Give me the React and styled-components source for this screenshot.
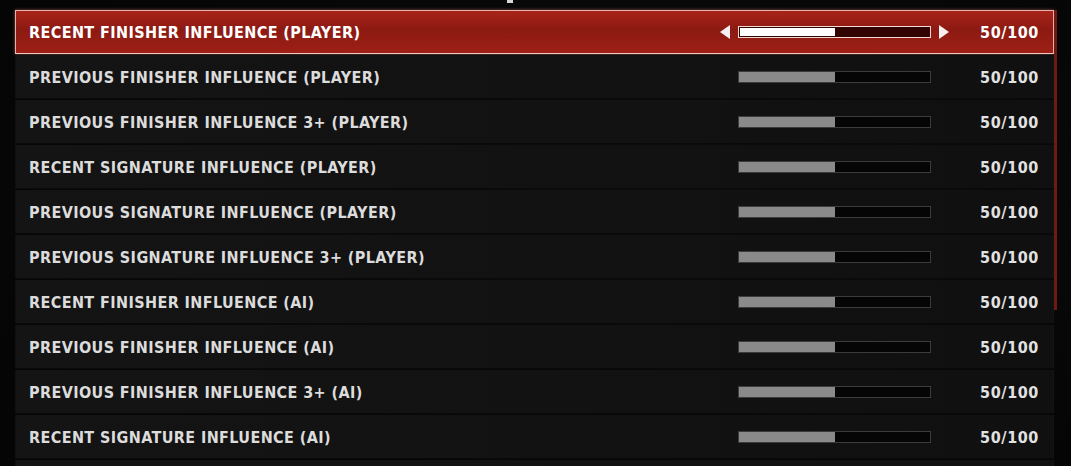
import styled, { createGlobalStyle } from "styled-components";

const Global = createGlobalStyle`
  html, body {
    margin: 0;
    padding: 0;
    background: #060606;
  }
  body {
    font-family: "DejaVu Sans", "Liberation Sans", sans-serif;
  }
`;

const Page = styled.div`
  width: 1071px;
  height: 466px;
  overflow: hidden;
  background: radial-gradient(ellipse at 60% 40%, #0d0d0d 0%, #050505 80%);
  display: flex;
  flex-direction: column;
`;

const TopStrip = styled.div`
  height: 10px;
  flex-shrink: 0;
  display: flex;
  justify-content: flex-start;
  padding-left: 507px;
`;

const Tick = styled.div`
  width: 6px;
  height: 3px;
  background: #d8d8d8;
`;

const ListWrap = styled.div`
  display: flex;
  flex-shrink: 0;
  margin-left: 15px;
  width: 1042px;
`;

const List = styled.div`
  flex: 1;
  display: flex;
  flex-direction: column;
  gap: 1px;
`;

const Scroll = styled.div`
  width: 3px;
  align-self: flex-start;
  height: 300px;
  background: #6e1a14;
`;

const Row = styled.div`
  height: 44px;
  flex-shrink: 0;
  box-sizing: border-box;
  display: flex;
  align-items: center;
  padding: 0 14px 0 13px;
  background: ${(p) =>
    p.$active
      ? "linear-gradient(180deg, #a8231a 0%, #8c1a12 45%, #9e2016 100%)"
      : "linear-gradient(90deg, #141414 0%, #121212 50%, #101010 100%)"};
  border: ${(p) => (p.$active ? "1px solid #e6b2aa" : "1px solid transparent")};
  border-bottom-color: ${(p) => (p.$active ? "#f0c8c0" : "#0a0a0a")};
  box-shadow: ${(p) => (p.$active ? "0 0 3px rgba(255,150,140,0.5)" : "none")};
`;

const Label = styled.div`
  flex: 1;
  font-size: 16px;
  font-weight: bold;
  font-stretch: condensed;
  letter-spacing: 0.4px;
  color: ${(p) => (p.$active ? "#ffffff" : "#dcdcdc")};
  white-space: nowrap;
`;

const Control = styled.div`
  display: flex;
  align-items: center;
  gap: 8px;
`;

const Arrow = styled.div`
  width: 0;
  height: 0;
  border-top: 7px solid transparent;
  border-bottom: 7px solid transparent;
  ${(p) =>
    p.$dir === "left"
      ? "border-right: 10px solid #f4f0f0;"
      : "border-left: 10px solid #f4f0f0;"}
  visibility: ${(p) => (p.$show ? "visible" : "hidden")};
`;

const Bar = styled.div`
  width: 193px;
  height: 12px;
  box-sizing: border-box;
  border: 1px solid ${(p) => (p.$active ? "#f2d8d4" : "#3c3c3c")};
  background: ${(p) => (p.$active ? "#330404" : "#050505")};
  padding: ${(p) => (p.$active ? "1px" : "0")};
  display: flex;
`;

const Fill = styled.div`
  height: 100%;
  background: ${(p) => (p.$active ? "#ffffff" : "#8a8a8a")};
`;

const Value = styled.div`
  width: 90px;
  text-align: right;
  font-size: 16px;
  font-weight: bold;
  font-stretch: condensed;
  letter-spacing: 0.6px;
  color: ${(p) => (p.$active ? "#ffffff" : "#e2e2e2")};
`;

const rows = [
  "RECENT FINISHER INFLUENCE (PLAYER)",
  "PREVIOUS FINISHER INFLUENCE (PLAYER)",
  "PREVIOUS FINISHER INFLUENCE 3+ (PLAYER)",
  "RECENT SIGNATURE INFLUENCE (PLAYER)",
  "PREVIOUS SIGNATURE INFLUENCE (PLAYER)",
  "PREVIOUS SIGNATURE INFLUENCE 3+ (PLAYER)",
  "RECENT FINISHER INFLUENCE (AI)",
  "PREVIOUS FINISHER INFLUENCE (AI)",
  "PREVIOUS FINISHER INFLUENCE 3+ (AI)",
  "RECENT SIGNATURE INFLUENCE (AI)",
];

export default function App() {
  const value = 50;
  return (
    <>
      <Global />
      <Page>
        <TopStrip>
          <Tick />
        </TopStrip>
        <ListWrap>
          <List>
            {rows.map((name, i) => {
              const active = i === 0;
              return (
                <Row key={name} $active={active}>
                  <Label $active={active}>{name}</Label>
                  <Control>
                    <Arrow $dir="left" $show={active} />
                    <Bar $active={active}>
                      <Fill $active={active} style={{ width: `${value}%` }} />
                    </Bar>
                    <Arrow $dir="right" $show={active} />
                  </Control>
                  <Value $active={active}>{value}/100</Value>
                </Row>
              );
            })}
            <Row />
          </List>
          <Scroll />
        </ListWrap>
      </Page>
    </>
  );
}
